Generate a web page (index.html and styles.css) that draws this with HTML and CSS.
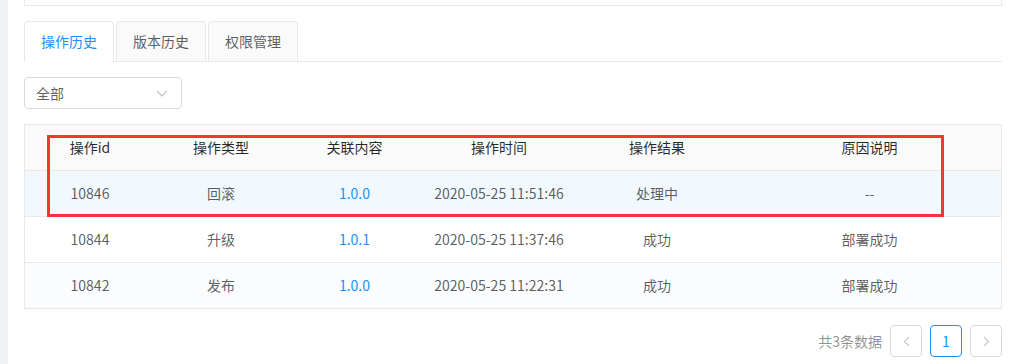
FILE: index.html
```html
<!DOCTYPE html>
<html lang="zh-CN">
<head>
  <meta charset="UTF-8">
  <title>操作历史</title>
  <link rel="stylesheet" href="styles.css">
</head>
<body>
  <div class="layout">
    <aside class="side"></aside>
    <main class="main">
      <div class="top-card"></div>

      <div class="tabs">
        <div class="tab active">操作历史</div>
        <div class="tab">版本历史</div>
        <div class="tab">权限管理</div>
      </div>

      <div class="select">
        <span>全部</span>
        <svg class="arrow" width="12" height="7" viewBox="0 0 12 7" fill="none" stroke="currentColor" stroke-width="1.1">
          <path d="M1 1l5 5 5-5"/>
        </svg>
      </div>

      <div class="table-wrap">
        <table>
          <colgroup>
            <col style="width:130px">
            <col style="width:132px">
            <col style="width:135px">
            <col style="width:154px">
            <col style="width:162px">
            <col>
          </colgroup>
          <thead>
            <tr>
              <th>操作id</th>
              <th>操作类型</th>
              <th>关联内容</th>
              <th>操作时间</th>
              <th>操作结果</th>
              <th>原因说明</th>
            </tr>
          </thead>
          <tbody>
            <tr class="hover">
              <td>10846</td>
              <td>回滚</td>
              <td><a href="#">1.0.0</a></td>
              <td>2020-05-25 11:51:46</td>
              <td>处理中</td>
              <td>--</td>
            </tr>
            <tr>
              <td>10844</td>
              <td>升级</td>
              <td><a href="#">1.0.1</a></td>
              <td>2020-05-25 11:37:46</td>
              <td>成功</td>
              <td>部署成功</td>
            </tr>
            <tr class="tint">
              <td>10842</td>
              <td>发布</td>
              <td><a href="#">1.0.0</a></td>
              <td>2020-05-25 11:22:31</td>
              <td>成功</td>
              <td>部署成功</td>
            </tr>
          </tbody>
        </table>
        <div class="mark"></div>
      </div>

      <div class="pager">
        <span class="total">共3条数据</span>
        <span class="page-btn disabled">
          <svg width="7" height="11" viewBox="0 0 7 11" fill="none" stroke="currentColor" stroke-width="1.1"><path d="M6 1L1.5 5.5 6 10"/></svg>
        </span>
        <span class="page-btn current">1</span>
        <span class="page-btn disabled">
          <svg width="7" height="11" viewBox="0 0 7 11" fill="none" stroke="currentColor" stroke-width="1.1"><path d="M1 1l4.5 4.5L1 10"/></svg>
        </span>
      </div>
    </main>
  </div>
</body>
</html>
```

FILE: styles.css
```css
:root {
  --primary: #1890ff;
  --border: #e8e8e8;
  --text: rgba(0, 0, 0, 0.65);
  --heading: rgba(0, 0, 0, 0.85);
}

body {
  margin: 0;
  background: #fff;
  font-family: "Noto Sans CJK SC", "Noto Sans", sans-serif;
  font-size: 14px;
  color: var(--text);
}

.layout {
  display: flex;
  min-height: 100vh;
}

.side {
  width: 8px;
  flex: none;
  background: #f0f2f5;
}

.main {
  flex: 1;
  padding: 0 12px 0 16px;
}

.top-card {
  height: 5px;
  border: 1px solid var(--border);
  border-top: none;
}

/* tabs */
.tabs {
  display: flex;
  gap: 2px;
  margin-top: 15px;
  border-bottom: 1px solid var(--border);
}

.tab {
  width: 90px;
  height: 40px;
  box-sizing: border-box;
  border: 1px solid var(--border);
  border-bottom: none;
  border-radius: 4px 4px 0 0;
  background: #fafafa;
  line-height: 39px;
  text-align: center;
}

.tab.active {
  background: #fff;
  color: var(--primary);
  height: 41px;
  margin-bottom: -1px;
}

/* select */
.select {
  display: flex;
  align-items: center;
  justify-content: space-between;
  width: 158px;
  height: 32px;
  box-sizing: border-box;
  margin-top: 15px;
  padding: 0 13px 0 11px;
  border: 1px solid #d9d9d9;
  border-radius: 4px;
}

.select .arrow {
  color: #bfbfbf;
}

/* table */
.table-wrap {
  position: relative;
  margin-top: 15px;
  border: 1px solid var(--border);
  border-bottom: none;
}

table {
  width: 100%;
  border-collapse: separate;
  border-spacing: 0;
  table-layout: fixed;
}

th, td {
  padding: 12px 8px;
  line-height: 21px;
  text-align: center;
  border-bottom: 1px solid var(--border);
  white-space: nowrap;
}

th {
  background: #fafafa;
  color: var(--heading);
  font-weight: normal;
}

tr.hover td {
  background: #f2f9fe;
}

tr.tint td {
  background: #fbfcfe;
}

td a {
  color: var(--primary);
  text-decoration: none;
}

.mark {
  position: absolute;
  left: 22px;
  top: 10px;
  width: 897px;
  height: 82px;
  box-sizing: border-box;
  border: 3px solid #f33;
}

/* pagination */
.pager {
  display: flex;
  justify-content: flex-end;
  align-items: center;
  gap: 8px;
  margin-top: 16px;
}

.total {
  color: rgba(0, 0, 0, 0.45);
}

.page-btn {
  display: flex;
  align-items: center;
  justify-content: center;
  width: 32px;
  height: 32px;
  box-sizing: border-box;
  border: 1px solid #d9d9d9;
  border-radius: 4px;
}

.page-btn.disabled {
  color: #c8c8c8;
}

.page-btn.current {
  border-color: var(--primary);
  color: var(--primary);
}
```
